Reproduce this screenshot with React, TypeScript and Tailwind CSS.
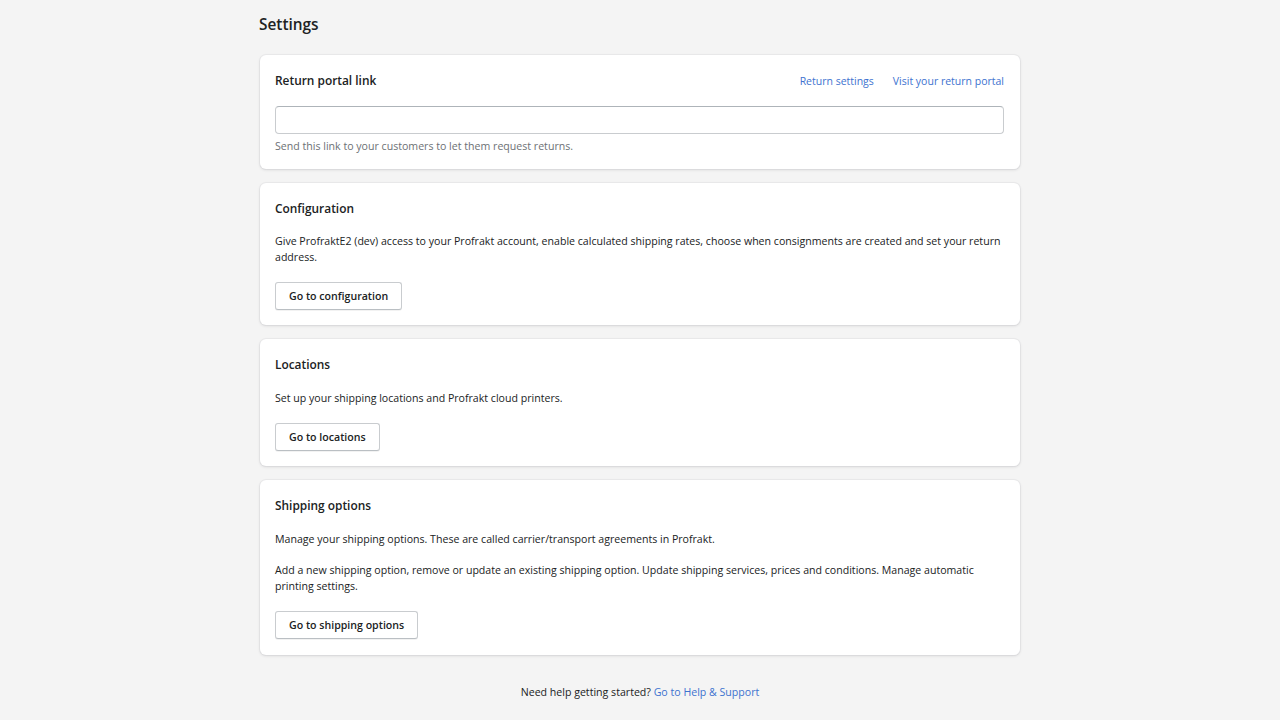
import React from "react";

const font = { fontFamily: '"Open Sans", "Noto Sans", Arial, sans-serif' };

function Card({ children, last }: { children: React.ReactNode; last?: boolean }) {
  return (
    <div
      className={
        last
          ? "rounded-[6px] bg-white pl-[15px] pr-[16px] pt-[16px] pb-[16px] shadow-[0_0_0_1px_rgba(63,63,68,0.04),0_1px_3px_0_rgba(63,63,68,0.15)]"
          : "rounded-[6px] bg-white pl-[15px] pr-[16px] pt-[16px] pb-[15px] shadow-[0_0_0_1px_rgba(63,63,68,0.04),0_1px_3px_0_rgba(63,63,68,0.15)]"
      }
    >
      {children}
    </div>
  );
}

function Heading({ children }: { children: React.ReactNode }) {
  return <h2 className="h-[20px] text-[11.9px] font-semibold leading-[19px] text-[#202223]">{children}</h2>;
}

function Btn({ children }: { children: React.ReactNode }) {
  return (
    <div className="mt-[17px] flex">
      <button className="h-[28px] rounded-[3px] border border-[#c9cccf] border-b-[#babfc3] bg-white px-[13px] text-[10.6px] font-semibold leading-[26px] text-[#202223] shadow-[0_1px_0_rgba(0,0,0,0.05)]">
        {children}
      </button>
    </div>
  );
}

export default function App() {
  return (
    <div className="min-h-[720px] bg-[#f4f4f4] text-[#202223]" style={font}>
      <div className="mx-auto w-[760px] pt-[13px]">
        <h1 className="h-[24px] -ml-[1px] text-[15.4px] font-semibold leading-[24px]">Settings</h1>
        <div className="mt-[18px] flex flex-col gap-[14px]">
          <Card>
            <div className="flex h-[20px] items-center justify-between">
              <Heading>Return portal link</Heading>
              <div className="flex gap-[19px] pt-[1px] text-[10.5px] text-[#3d72cf]">
                <a>Return settings</a>
                <a>Visit your return portal</a>
              </div>
            </div>
            <div className="mt-[15px] h-[28px] rounded-[4px] border border-[#c9cccf] border-t-[#aeb4b9] bg-white" />
            <p className="mt-[4px] text-[10.6px] leading-[16px] text-[#6d7175]">
              Send this link to your customers to let them request returns.
            </p>
          </Card>
          <Card>
            <Heading>Configuration</Heading>
            <p className="mt-[14px] text-[10.6px] leading-[16px]">
              Give ProfraktE2 (dev) access to your Profrakt account, enable calculated shipping rates, choose when consignments are created and set your return address.
            </p>
            <Btn>Go to configuration</Btn>
          </Card>
          <Card>
            <Heading>Locations</Heading>
            <p className="mt-[15px] text-[10.6px] leading-[16px]">
              Set up your shipping locations and Profrakt cloud printers.
            </p>
            <Btn>Go to locations</Btn>
          </Card>
          <Card last>
            <Heading>Shipping options</Heading>
            <p className="mt-[15px] text-[10.6px] leading-[16px]">
              Manage your shipping options. These are called carrier/transport agreements in Profrakt.
            </p>
            <p className="mt-[15px] text-[10.6px] leading-[16px]">
              Add a new shipping option, remove or update an existing shipping option. Update shipping services, prices and conditions. Manage automatic printing settings.
            </p>
            <Btn>Go to shipping options</Btn>
          </Card>
        </div>
        <p className="mt-[29px] text-center text-[10.6px] leading-[16px]">
          Need help getting started? <a className="text-[#3d72cf]">Go to Help &amp; Support</a>
        </p>
      </div>
    </div>
  );
}
